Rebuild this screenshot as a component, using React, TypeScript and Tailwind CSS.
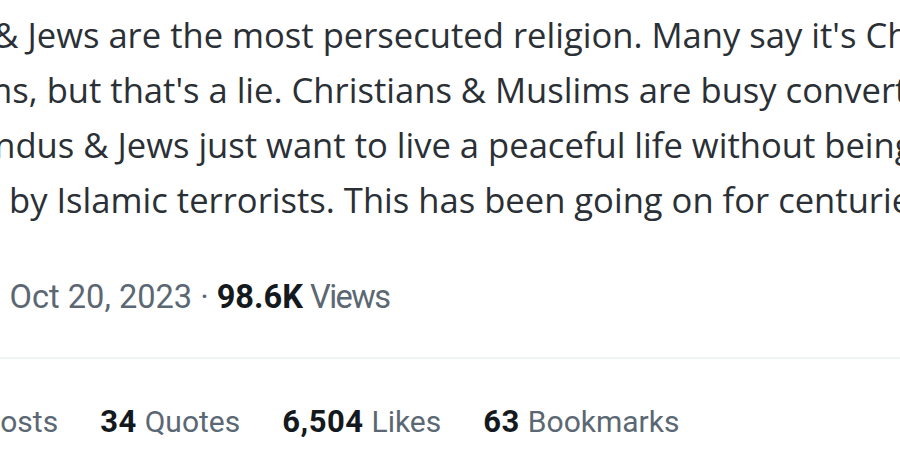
import React from "react";

const bodyLines: { text: string; cls: string }[] = [
  { text: "Hindus & Jews are the most persecuted religion. Many say it's Christians", cls: "ml-[-130px]" },
  { text: "Muslims, but that's a lie. Christians & Muslims are busy converting people.", cls: "ml-[-106px]" },
  { text: "Hindus & Jews just want to live a peaceful life without being killed", cls: "ml-[-40px]" },
  { text: "by Islamic terrorists. This has been going on for centuries.", cls: "ml-[9px]" },
];

function Stat({ n, label }: { n: string; label: string }) {
  return (
    <span className="flex items-baseline whitespace-nowrap">
      <span className="text-[31px] tracking-[0.5px] font-bold text-[#14191d]">{n}</span>
      <span className="ml-[8px] text-[30px] text-[#5b6873]">{label}</span>
    </span>
  );
}

export default function App() {
  return (
    <div className="w-[900px] h-[452px] overflow-hidden bg-white">
      <div className="pt-[7px] text-[34.6px] leading-[55px] text-[#2a3035] font-['Open_Sans',sans-serif]">
        {bodyLines.map((l) => (
          <div key={l.text} className={`whitespace-nowrap ${l.cls}`}>
            {l.text}
          </div>
        ))}
      </div>

      <div className="mt-[50px] ml-[-7px] flex items-baseline whitespace-nowrap text-[32.6px] leading-[40px] font-['Roboto',sans-serif] text-[#5b6873]">
        <span>· Oct 20, 2023</span>
        <span className="mx-[8px]">·</span>
        <span className="font-bold text-[#14191d]">98.6K</span>
        <span className="ml-[7px] tracking-[-1.5px]">Views</span>
      </div>

      <div className="mt-[40px] h-[2px] bg-[#eff3f4]" />

      <div className="mt-[43px] ml-[-51px] flex items-baseline gap-[42px] leading-[40px] font-['Roboto',sans-serif]">
        <span className="text-[30px] text-[#5b6873] whitespace-nowrap">Reposts</span>
        <Stat n="34" label="Quotes" />
        <Stat n="6,504" label="Likes" />
        <Stat n="63" label="Bookmarks" />
      </div>
    </div>
  );
}
